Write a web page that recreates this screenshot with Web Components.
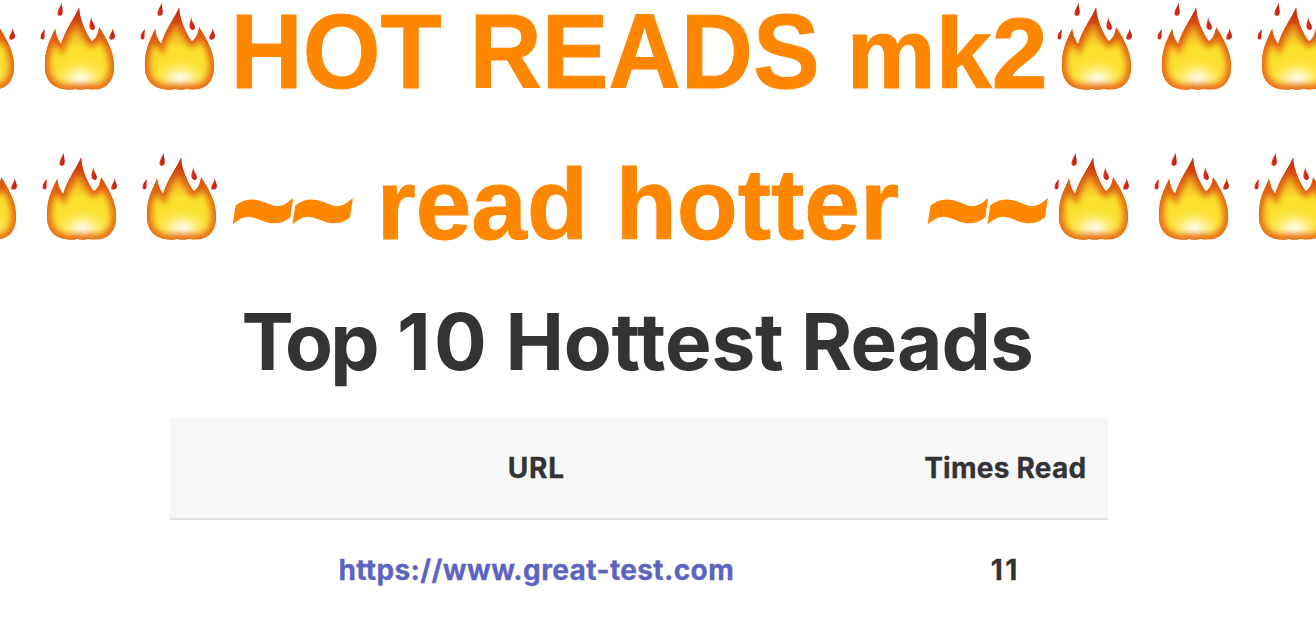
<!DOCTYPE html>
<html lang="en">
<head>
<meta charset="utf-8">
<title>Hot Reads mk2</title>
<style>
html,body{margin:0;background:#fff}
body{height:618px;overflow:hidden;font-family:Inter,sans-serif;color:#333}
.gap{margin-right:26.8px}
.lower{font-size:101px}
.subtitle{width:1276.3px;align-self:flex-start}
</style>
</head>
<body>
<hot-page>
  <fire-banner><fit-text class="gap" width="588.9" scale>HOT READS</fit-text><fit-text class="lower" width="201.1" scale>mk2</fit-text></fire-banner>
  <fire-banner class="subtitle"><wavy-tildes><fit-text width="116.8" scale>~~</fit-text></wavy-tildes><fit-text class="lower" width="577.9" scale>&nbsp;read hotter&nbsp;</fit-text><wavy-tildes><fit-text width="116.8" scale>~~</fit-text></wavy-tildes></fire-banner>
  <reads-heading><fit-text width="136" style="margin-right:19.5px">Top</fit-text> <fit-text width="93.5" style="margin-right:15px">10</fit-text> <fit-text width="278.5" style="margin-right:17px">Hottest</fit-text> <fit-text width="232.5">Reads</fit-text></reads-heading>
  <reads-table>
    <reads-row head><fit-text slot="url" width="57.5">URL</fit-text><fit-text slot="count" width="162.5">Times Read</fit-text></reads-row>
    <reads-row><reads-link slot="url" href="https://www.great-test.com"><fit-text width="396">https://www.great-test.com</fit-text></reads-link><fit-text slot="count" width="29">11</fit-text></reads-row>
  </reads-table>
</hot-page>
<script>
function define(name, html, extra) {
  const template = document.createElement('template');
  template.innerHTML = html;
  customElements.define(name, class extends HTMLElement {
    constructor() {
      super();
      this.attachShadow({mode: 'open'}).append(template.content.cloneNode(true));
    }
    connectedCallback() { if (extra) extra(this); }
  });
}

define('hot-page', `<style>
:host{display:flex;flex-direction:column;align-items:center;width:1277.5px;padding-top:1px}
</style><slot></slot>`);

define('fire-emoji', `<style>
:host{display:block;flex:none;align-self:flex-start;width:100px;height:100px}
svg{display:block;width:100%;height:100%}
</style>
<svg viewBox="-13.5 3 300 300" role="img" aria-label="fire">
  <defs>
    <path id="flame" d="M134 22C123 50 92 90 80 132C69 116 65 106 62 86C48 117 32 145 31 190C29 235 49 269 105 269Q114 270 121 266Q129 269 138 269Q149 269 156 266Q166 269 178 268C219 269 240 239 239 195C237 150 213 112 194 82C190 104 184 117 172 124C155 103 134 55 134 22Z"/>
    <clipPath id="inside"><use href="#flame"/></clipPath>
    <linearGradient id="edge" gradientUnits="userSpaceOnUse" x1="0" y1="22" x2="0" y2="269">
      <stop offset="0" stop-color="#c52412"/><stop offset=".3" stop-color="#dc570f"/><stop offset=".65" stop-color="#e66812"/><stop offset="1" stop-color="#e96a14"/>
    </linearGradient>
    <linearGradient id="base" gradientUnits="userSpaceOnUse" x1="0" y1="22" x2="0" y2="269">
      <stop offset="0" stop-color="#d8481a"/><stop offset=".22" stop-color="#eda023"/><stop offset=".5" stop-color="#fbe22c"/><stop offset="1" stop-color="#fddf38"/>
    </linearGradient>
    <radialGradient id="glow" gradientUnits="userSpaceOnUse" cx="0" cy="0" r="1" gradientTransform="translate(138 238) scale(88 66)">
      <stop offset="0" stop-color="#fffef4"/><stop offset=".3" stop-color="#fff8c8" stop-opacity=".85"/><stop offset="1" stop-color="#fde93e" stop-opacity="0"/>
    </radialGradient>
    <linearGradient id="drop" x1="0" y1="0" x2="1" y2="0"><stop stop-color="#e33821"/><stop offset="1" stop-color="#bd190f"/></linearGradient>
    <filter id="soft" filterUnits="userSpaceOnUse" x="-14" y="-10" width="310" height="310"><feGaussianBlur stdDeviation="9.5"/></filter>
  </defs>
  <g clip-path="url(#inside)">
    <use href="#flame" fill="url(#base)"/>
    <use href="#flame" fill="url(#glow)"/>
    <use href="#flame" fill="none" stroke="url(#edge)" stroke-width="29" filter="url(#soft)"/>
    <use href="#flame" fill="none" stroke="url(#edge)" stroke-width="4" opacity=".7"/>
  </g>
  <g fill="url(#drop)">
    <path d="M82 8C77 21 69 29 69 41C69 50 82 49 84 41C87 31 81 20 82 8Z"/>
    <path d="M170 50C169 63 163 73 165 82C168 92 179 93 181 84C182 71 171 67 170 50Z"/>
    <path d="M32 88C25 94 18 102 18 111C18 122 31 121 30 108C30 101 30 95 32 88Z"/>
    <path d="M235 85C234 96 225 104 224 113C223 121 237 121 241 112C243 103 236 96 235 85Z"/>
  </g>
</svg>`);

define('fire-banner', `<style>
:host{display:flex;justify-content:center;align-items:flex-start;width:100%;height:100px;margin-bottom:50px;font:bold 106px/100px "Liberation Sans",Arial,sans-serif;color:#ff8700;-webkit-text-stroke:1px #ff8700}
.words{display:flex;align-items:baseline;flex:none}
</style>
<fire-emoji></fire-emoji><fire-emoji></fire-emoji><fire-emoji></fire-emoji><div class="words"><slot></slot></div><fire-emoji></fire-emoji><fire-emoji></fire-emoji><fire-emoji></fire-emoji>`);

/* A heavier pair of tildes, slanted and set a little lower than the font has them. */
define('wavy-tildes', `<style>
:host{display:block;font-size:110px;-webkit-text-stroke:5px #ff8700;transform:translate(1px,9px) scale(1.02,1.06) skewX(-9deg);transform-origin:50% 60%}
</style><slot></slot>`);

/* Sets its text to an exact width, by letter-spacing or by scaling the glyphs. */
define('fit-text', `<style>
:host{display:flex;flex:none;justify-content:center;white-space:nowrap}
span{flex:none}
</style><span><slot></slot></span>`, el => {
  const width = parseFloat(el.getAttribute('width'));
  const span = el.shadowRoot.querySelector('span');
  el.style.width = width + 'px';
  requestAnimationFrame(() => {
    const natural = span.offsetWidth;
    if (el.hasAttribute('scale')) span.style.transform = 'scaleX(' + width / natural + ')';
    else el.style.letterSpacing = (width - natural) / el.textContent.length + 'px';
  });
});

define('reads-heading', `<style>
:host{display:flex;font:bold 78.3px/96px Inter,sans-serif;color:#333;margin:-7px 0 28px -3px}
</style><slot></slot>`);

define('reads-table', `<style>
:host{display:block;width:938px;font:bold 28px/40px Inter,sans-serif;-webkit-text-stroke:.3px}
</style><slot></slot>`);

define('reads-row', `<style>
:host{display:grid;grid-template-columns:733px 205px;height:100px;align-items:center;justify-items:center;border-bottom:2px solid #e1e1e1}
:host([head]){background:#f7f7f7}
</style><slot name="url"></slot><slot name="count"></slot>`);

define('reads-link', `<style>
:host{display:block}
a{color:#5c64c0;text-decoration:none}
</style><a><slot></slot></a>`, el => { el.shadowRoot.querySelector('a').href = el.getAttribute('href'); });
</script>
</body>
</html>
